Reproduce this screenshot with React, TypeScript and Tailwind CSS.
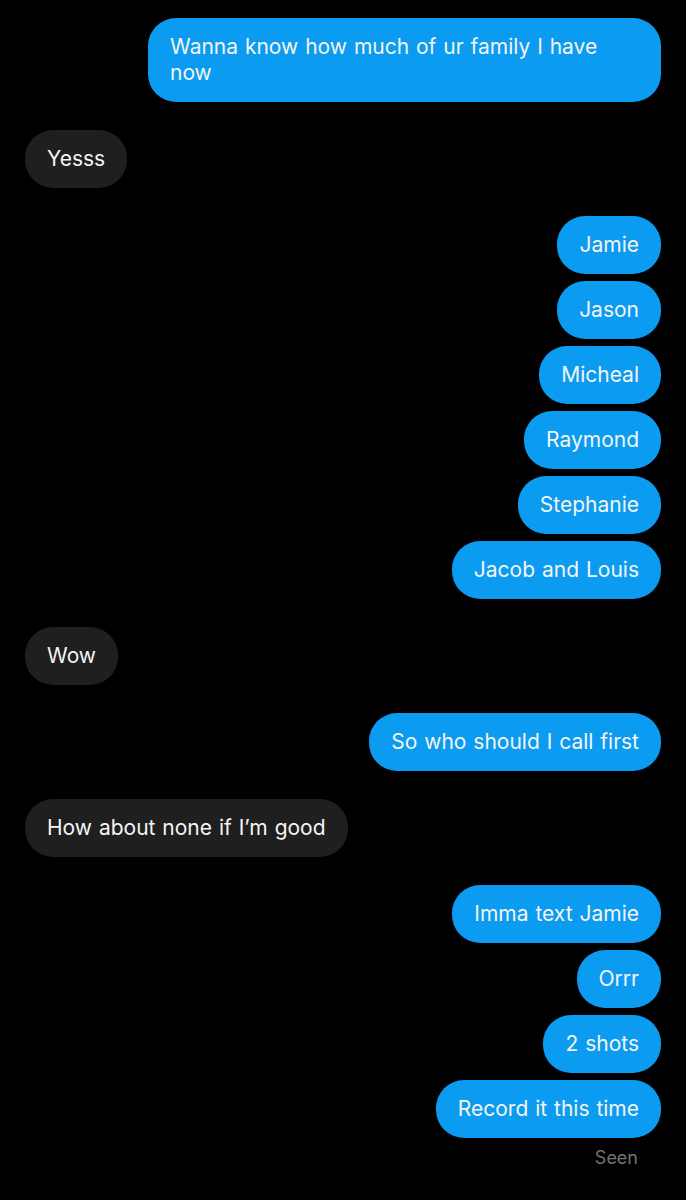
import React from "react";

type Msg = { text: string; me: boolean; wide?: boolean };

const groups: Msg[][] = [
  [{ text: "Wanna know how much of ur family I have now", me: true, wide: true }],
  [{ text: "Yesss", me: false }],
  [
    { text: "Jamie", me: true },
    { text: "Jason", me: true },
    { text: "Micheal", me: true },
    { text: "Raymond", me: true },
    { text: "Stephanie", me: true },
    { text: "Jacob and Louis", me: true },
  ],
  [{ text: "Wow", me: false }],
  [{ text: "So who should I call first", me: true }],
  [{ text: "How about none if I’m good", me: false }],
  [
    { text: "Imma text Jamie", me: true },
    { text: "Orrr", me: true },
    { text: "2 shots", me: true },
    { text: "Record it this time", me: true },
  ],
];

function Bubble({ m }: { m: Msg }) {
  return (
    <div className={m.me ? "flex justify-end" : "flex justify-start"}>
      <div
        className={
          (m.me ? "bg-[#0b9bf0] " : "bg-[#1f1f1f] ") +
          (m.wide ? "w-[513px] " : "") +
          "rounded-[28px] px-[22px] py-[16px] text-[21px] leading-[26px] text-[#f4f4f4] [word-spacing:1px]"
        }
      >
        <span className={m.wide ? "block max-w-[440px]" : ""}>{m.text}</span>
      </div>
    </div>
  );
}

export default function App() {
  return (
    <div
      className="min-h-[1200px] w-[686px] bg-black px-[25px] pt-[18px]"
      style={{ fontFamily: "Inter, 'Noto Sans', sans-serif" }}
    >
      <div className="flex flex-col gap-[28px]">
        {groups.map((g, i) => (
          <div key={i} className="flex flex-col gap-[7px]">
            {g.map((m, j) => (
              <Bubble key={j} m={m} />
            ))}
          </div>
        ))}
      </div>
      <div className="flex justify-end pr-[23px] pt-[8px] text-[18px] leading-[24px] text-[#737373]">
        Seen
      </div>
    </div>
  );
}
